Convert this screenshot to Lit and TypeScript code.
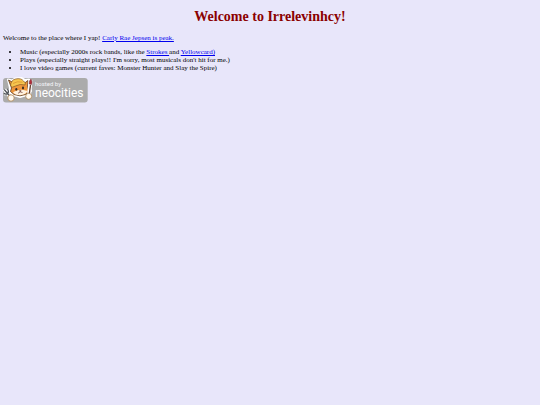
import { LitElement, html, css } from "lit";
import { customElement } from "lit/decorators.js";

@customElement("neocities-badge")
class NeocitiesBadge extends LitElement {
  static styles = css`
    :host { display: block; }
    .link { display: inline-block; vertical-align: top; }
    .badge { display: block; width: 85px; height: 26px; overflow: visible; }
    .small { font: 6px Roboto, sans-serif; fill: #f4f4f8; }
    .name { font: 12px Roboto, sans-serif; fill: #fff; }
  `;

  render() {
    return html`
      <a class="link" href="https://neocities.org/" aria-label="Hosted by Neocities">
        <svg class="badge" viewBox="0 0 85 26" aria-hidden="true">
          <rect x="0" y="1" width="84.7" height="24.5" rx="3" fill="#ababab" />
          <!-- cat -->
          <path d="M5 2.5 L9 3.5 L12 1.5 L18 1 L22 3 L26 2.5 L25.5 9 L28 14 L24 18 L17 20 L10 18 L6 15 L7 11 Z" fill="#fff" stroke="#fff" stroke-width="2" stroke-linejoin="round" />
          <path d="M5.5 3 L11 6 L21 6.5 L25 3.5 L24.5 10 L26 14 L22.5 17.5 L17 18.8 L11 17.5 L7.5 14.5 L8.5 11 Z" fill="#ee963c" stroke="#5c3a20" stroke-width="0.8" />
          <path d="M11.5 14.5 Q16.5 12 20.5 13 L24.5 14 Q22.5 18 17 18.2 Q12 18 10 15.5 Z" fill="#fff2df" />
          <path d="M7.5 8.5 Q8 3 12.5 2 Q18 0.7 20.5 4 Q23.5 6 22 8 Q17 6.5 12.5 9 Q9 11.5 7.5 8.5 Z" fill="#f6c64f" stroke="#855522" stroke-width="0.7" />
          <path d="M10 6.5 Q14 3.8 19.5 5.2" fill="none" stroke="#d88c2c" stroke-width="0.7" />
          <ellipse cx="13.3" cy="12.3" rx="1" ry="1.4" fill="#352a24" />
          <ellipse cx="20" cy="11" rx="1" ry="1.4" fill="#352a24" />
          <path d="M16 14 L18 13.5 L17.2 14.9 L19.5 15.5 M17.2 14.9 L15 16.3" fill="none" stroke="#6b3428" stroke-width="0.7" />
          <!-- fork -->
          <path d="M1 12.5 L3.5 15.5 L7.5 20.5 M5 12 L5.2 16 L1 17" fill="none" stroke="#fff" stroke-width="3" />
          <path d="M1.2 12.5 L7.5 20 M4.5 11.8 Q6.2 14.8 4.8 16.5 Q3 18 0.8 16.3" fill="none" stroke="#4d5157" stroke-width="1.2" />
          <!-- brush -->
          <path d="M27.5 4 L26 18" stroke="#fff" stroke-width="4" stroke-linecap="round" />
          <path d="M27.5 8 L26 19" stroke="#684332" stroke-width="1.4" />
          <path d="M26.2 7 Q25.9 3.5 28 2 Q29.5 4.5 28.5 7.5 Z" fill="#b52b38" stroke="#6b2d35" stroke-width="0.5" />
          <!-- paws -->
          <circle cx="8" cy="21" r="3.2" fill="#fffaf1" stroke="#a57944" stroke-width="0.7" />
          <circle cx="25.7" cy="19.3" r="3" fill="#fffaf1" stroke="#a57944" stroke-width="0.7" />
          <text class="small" x="32" y="9">hosted by</text>
          <text class="name" x="32" y="20">neocities</text>
        </svg>
      </a>
    `;
  }
}

@customElement("app-root")
class AppRoot extends LitElement {
  static styles = css`
    :host {
      display: block;
      box-sizing: border-box;
      min-height: 100vh;
      padding: 9px 3px;
      background: #e8e6fa;
      color: #000;
      font: 7px/8px "Liberation Serif", "Times New Roman", serif;
    }
    .title {
      margin: 0 0 9px;
      color: #8b0000;
      font-size: 14px;
      line-height: 16px;
      text-align: center;
    }
    .intro { margin: 0; }
    .list { margin: 6px 0 5px; padding: 0 0 0 17px; }
    .text-link { color: #0000ee; text-decoration: underline; }
  `;

  render() {
    return html`
      <main>
        <h1 class="title">Welcome to Irrelevinhcy!</h1>
        <p class="intro">
          Welcome to the place where I yap!
          <a class="text-link" href="#carly">Carly Rae Jepsen is peak.</a>
        </p>
        <ul class="list">
          <li>Music (especially 2000s rock bands, like the <a class="text-link" href="#strokes">Strokes </a>and <a class="text-link" href="#yellowcard">Yellowcard)</a></li>
          <li>Plays (especially straight plays!! I'm sorry, most musicals don't hit for me.)</li>
          <li>I love video games (current faves: Monster Hunter and Slay the Spire)</li>
        </ul>
        <neocities-badge></neocities-badge>
      </main>
    `;
  }
}
